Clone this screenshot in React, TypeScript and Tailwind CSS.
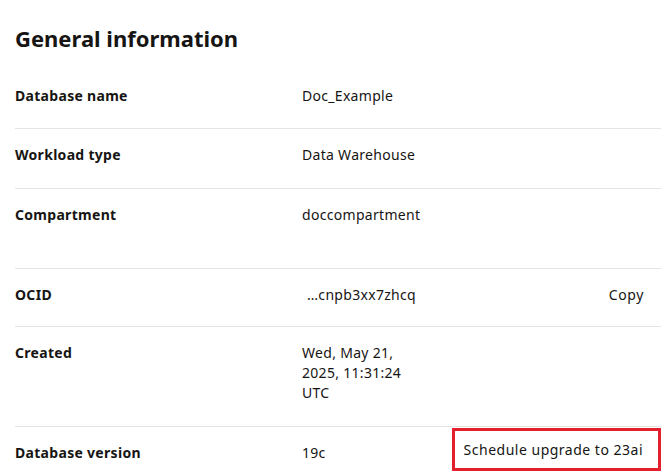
import React from 'react'

// Row data for the general information panel
const ROWS = [
  { label: 'Database name', value: 'Doc_Example' },
  { label: 'Workload type', value: 'Data Warehouse' },
  { label: 'Compartment', value: 'doccompartment', tall: true },
  { label: 'OCID', value: '…cnpb3xx7zhcq', action: 'copy' },
  { label: 'Created', value: 'Wed, May 21, 2025, 11:31:24 UTC', wrap: true },
  { label: 'Database version', value: '19c', action: 'upgrade' },
]

function InfoRow({ row, first }: { row: (typeof ROWS)[number]; first: boolean }) {
  return (
    <div
      className={`grid grid-cols-[287px_1fr_auto] items-start pt-[16px] tracking-[0.3px] ${
        first ? 'pb-[22px]' : 'border-t border-[#e4e4e4]'
      } ${row.action === 'copy' ? 'pb-[21px]' : ''} ${!first && row.action !== 'copy' ? 'pb-[23px]' : ''}`}
    >
      <div className="text-[14px] leading-[20px] font-bold text-[#161513]">{row.label}</div>
      <div
        className={`text-[14px] leading-[20px] text-[#161513] ${row.tall ? 'min-h-[40px]' : ''} ${
          row.wrap ? 'w-[125px]' : ''
        } ${row.action === 'copy' ? 'pl-[5px]' : ''}`}
      >
        {row.value}
      </div>
      {row.action === 'copy' && (
        <button className="pr-[17px] text-[14px] leading-[20px] tracking-[0.6px] text-[#161513]">Copy</button>
      )}
      {row.action === 'upgrade' && (
        <button className="-mt-[15px] border-[3px] border-[#e3202e] pl-[9px] pr-[15px] pt-[9px] pb-[8px] text-[14px] leading-[20px] tracking-[0.5px] text-[#161513]">
          Schedule upgrade to 23ai
        </button>
      )}
    </div>
  )
}

export default function App() {
  return (
    <div
      className="w-[671px] h-[474px] overflow-hidden bg-white pl-[15px] pr-[10px]"
      style={{ fontFamily: '"Noto Sans", "Open Sans", sans-serif' }}
    >
      <h2 className="pt-[24px] pb-[18px] text-[22px] leading-[28px] font-bold text-[#161513]">
        General information
      </h2>
      <div className="flex flex-col">
        {ROWS.map((row, i) => (
          <InfoRow key={row.label} row={row} first={i === 0} />
        ))}
      </div>
    </div>
  )
}
